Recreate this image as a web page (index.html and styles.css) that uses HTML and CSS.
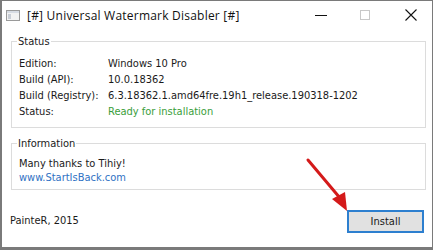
FILE: index.html
```html
<!DOCTYPE html>
<html>
<head>
<meta charset="utf-8">
<link rel="stylesheet" href="styles.css">
</head>
<body>
<div class="window">
  <div class="titlebar">
    <svg class="appicon" width="14" height="11" viewBox="0 0 14 11">
      <rect x="0.5" y="0.5" width="13" height="10" fill="#f2f2f2" stroke="#9a9a9a"/>
      <rect x="1" y="1" width="12" height="2" fill="#d6dbe3"/>
      <rect x="2" y="4" width="3" height="5" fill="#c9ced6"/>
    </svg>
    <span class="title">[#] Universal Watermark Disabler [#]</span>
    <div class="controls">
      <svg class="ctl" width="45" height="30" viewBox="0 0 45 30"><line x1="18" y1="14.5" x2="30" y2="14.5" stroke="#111" stroke-width="1"/></svg>
      <svg class="ctl" width="45" height="30" viewBox="0 0 45 30"><rect x="18.5" y="9.5" width="9" height="9" fill="none" stroke="#c8c8c8"/></svg>
      <svg class="ctl" width="45" height="30" viewBox="0 0 45 30"><path d="M18.5 8.5 L29.5 19.5 M29.5 8.5 L18.5 19.5" stroke="#111" stroke-width="1.1"/></svg>
    </div>
  </div>
  <div class="content">
    <fieldset class="group status">
      <legend>Status</legend>
      <div class="rows">
        <span class="lbl">Edition:</span><span>Windows 10 Pro</span>
        <span class="lbl">Build (API):</span><span>10.0.18362</span>
        <span class="lbl">Build (Registry):</span><span>6.3.18362.1.amd64fre.19h1_release.190318-1202</span>
        <span class="lbl">Status:</span><span class="ok">Ready for installation</span>
      </div>
    </fieldset>
    <fieldset class="group info">
      <legend>Information</legend>
      <div class="line">Many thanks to Tihiy!</div>
      <div class="line link">www.StartIsBack.com</div>
    </fieldset>
    <div class="footer">
      <span class="author">PainteR, 2015</span>
      <button class="btn">Install</button>
    </div>
  </div>
  <svg class="arrow" width="60" height="70" viewBox="0 0 60 70">
    <line x1="4" y1="4" x2="36" y2="42" stroke="#d41a1a" stroke-width="3" stroke-linecap="round"/>
    <polygon points="28,43 41,36 43,55" fill="#d41a1a"/>
  </svg>
</div>
</body>
</html>
```
FILE: styles.css
```css
html, body {
  margin: 0;
  padding: 0;
  background: #fff;
}
.window {
  position: relative;
  width: 433px;
  height: 250px;
  box-sizing: border-box;
  border: 1px solid #7a7a7a;
  border-left-width: 2px;
  border-bottom-width: 3px;
  background: #fff;
  display: flex;
  flex-direction: column;
  font-family: "DejaVu Sans Condensed", "DejaVu Sans", sans-serif;
  font-size: 11px;
  color: #1a1a1a;
}
.titlebar {
  height: 29px;
  display: flex;
  align-items: center;
  flex: none;
}
.appicon {
  margin-left: 4px;
  margin-right: 7px;
  flex: none;
}
.title {
  font-family: "Open Sans", "Noto Sans", sans-serif;
  font-size: 12px;
  color: #111;
  letter-spacing: 0.22px;
}
.controls {
  margin-left: auto;
  display: flex;
  align-self: flex-start;
}
.ctl {
  display: block;
}
.content {
  flex: 1;
  display: flex;
  flex-direction: column;
  padding: 0 6px 0 9px;
}
.group {
  margin: 0;
  border: 1px solid #dcdcdc;
  padding: 0 7px;
  min-width: 0;
}
.group legend {
  padding: 0 1px;
  margin-left: -2px;
  line-height: 13px;
}
.status {
  margin-top: 5px;
  padding-top: 8px;
  padding-bottom: 7px;
}
.rows {
  display: grid;
  grid-template-columns: 89px 1fr;
  grid-auto-rows: 16px;
  line-height: 16px;
  white-space: nowrap;
}
.ok {
  color: #3a9e3a;
}
.info {
  margin-top: 9px;
  padding-top: 7px;
  padding-bottom: 4px;
}
.line {
  line-height: 14px;
}
.link {
  color: #2f72c4;
}
.footer {
  flex: 1;
  display: flex;
  align-items: center;
  justify-content: space-between;
  margin-left: -1px;
  padding-top: 3px;
}
.btn {
  width: 77px;
  height: 23px;
  margin-right: 2px;
  margin-top: 2px;
  background: #e1e1e1;
  border: 1px solid #2d7fcf;
  box-shadow: inset 0 0 0 1px #2d7fcf;
  font-family: "DejaVu Sans Condensed", "DejaVu Sans", sans-serif;
  font-size: 11px;
  color: #1a1a1a;
  padding: 0;
}
.arrow {
  position: absolute;
  left: 302px;
  top: 155px;
}
```
